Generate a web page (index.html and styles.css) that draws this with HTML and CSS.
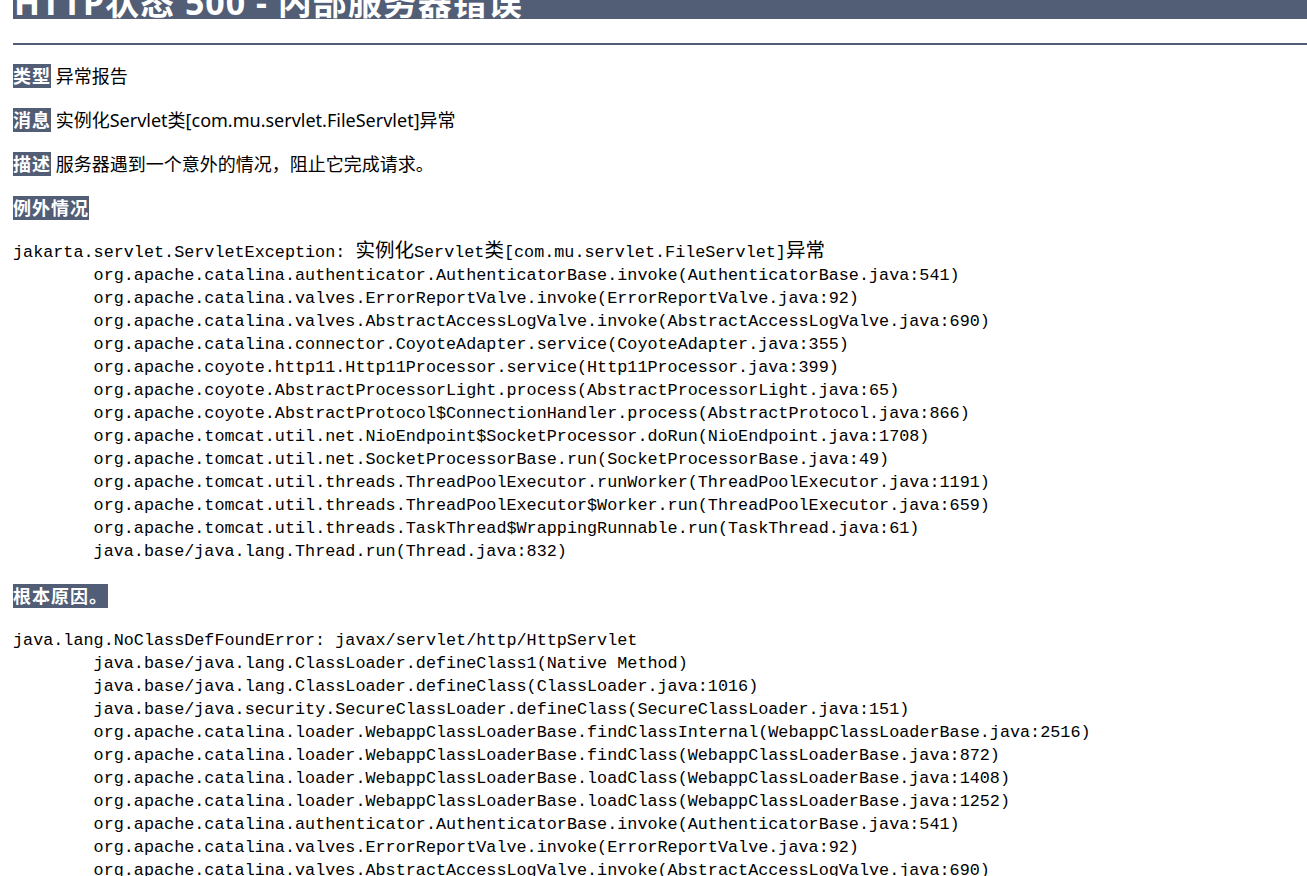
FILE: index.html
```
<!DOCTYPE html>
<html lang="zh-CN">
    <head>
        <meta charset="utf-8">
        <title>HTTP状态 500 - 内部服务器错误</title>
        <link rel="stylesheet" href="styles.css">
    </head>
    <body>
        <h1>HTTP状态 500 - 内部服务器错误</h1>
        <hr class="line">
        <p><b>类型</b> 异常报告</p>
        <p><b>消息</b> 实例化Servlet类[com.mu.servlet.FileServlet]异常</p>
        <p><b>描述</b> 服务器遇到一个意外的情况，阻止它完成请求。</p>
        <p><b>例外情况</b></p>
<pre>jakarta.servlet.ServletException: <span class="wide">实例化</span>Servlet<span class="wide">类</span>[com.mu.servlet.FileServlet]<span class="wide">异常</span>
	org.apache.catalina.authenticator.AuthenticatorBase.invoke(AuthenticatorBase.java:541)
	org.apache.catalina.valves.ErrorReportValve.invoke(ErrorReportValve.java:92)
	org.apache.catalina.valves.AbstractAccessLogValve.invoke(AbstractAccessLogValve.java:690)
	org.apache.catalina.connector.CoyoteAdapter.service(CoyoteAdapter.java:355)
	org.apache.coyote.http11.Http11Processor.service(Http11Processor.java:399)
	org.apache.coyote.AbstractProcessorLight.process(AbstractProcessorLight.java:65)
	org.apache.coyote.AbstractProtocol$ConnectionHandler.process(AbstractProtocol.java:866)
	org.apache.tomcat.util.net.NioEndpoint$SocketProcessor.doRun(NioEndpoint.java:1708)
	org.apache.tomcat.util.net.SocketProcessorBase.run(SocketProcessorBase.java:49)
	org.apache.tomcat.util.threads.ThreadPoolExecutor.runWorker(ThreadPoolExecutor.java:1191)
	org.apache.tomcat.util.threads.ThreadPoolExecutor$Worker.run(ThreadPoolExecutor.java:659)
	org.apache.tomcat.util.threads.TaskThread$WrappingRunnable.run(TaskThread.java:61)
	java.base/java.lang.Thread.run(Thread.java:832)</pre>
        <p><b>根本原因。</b></p>
<pre>java.lang.NoClassDefFoundError: javax/servlet/http/HttpServlet
	java.base/java.lang.ClassLoader.defineClass1(Native Method)
	java.base/java.lang.ClassLoader.defineClass(ClassLoader.java:1016)
	java.base/java.security.SecureClassLoader.defineClass(SecureClassLoader.java:151)
	org.apache.catalina.loader.WebappClassLoaderBase.findClassInternal(WebappClassLoaderBase.java:2516)
	org.apache.catalina.loader.WebappClassLoaderBase.findClass(WebappClassLoaderBase.java:872)
	org.apache.catalina.loader.WebappClassLoaderBase.loadClass(WebappClassLoaderBase.java:1408)
	org.apache.catalina.loader.WebappClassLoaderBase.loadClass(WebappClassLoaderBase.java:1252)
	org.apache.catalina.authenticator.AuthenticatorBase.invoke(AuthenticatorBase.java:541)
	org.apache.catalina.valves.ErrorReportValve.invoke(ErrorReportValve.java:92)
	org.apache.catalina.valves.AbstractAccessLogValve.invoke(AbstractAccessLogValve.java:690)
	org.apache.catalina.connector.CoyoteAdapter.service(CoyoteAdapter.java:355)
	org.apache.coyote.http11.Http11Processor.service(Http11Processor.java:399)</pre>
    </body>
</html>
```
FILE: styles.css
```
html {
    overflow: hidden;
}

body {
    margin: 0 0 0 13px;
    font-family: "Noto Sans", "Noto Sans CJK SC", sans-serif;
    color: black;
    background-color: white;
}

h1 {
    margin: -15px 0 24px 0;
    padding-left: 1px;
    font-size: 34px;
    line-height: 34px;
    letter-spacing: 1px;
    color: white;
    background-color: #525D76;
}

.line {
    height: 2px;
    margin: 0;
    border: none;
    background-color: #525D76;
}

p {
    margin: 18px 0;
    font-size: 18px;
    line-height: 26px;
    background: white;
    color: black;
}

b {
    letter-spacing: 1px;
    color: white;
    background-color: #525D76;
}

pre {
    margin: 20px 0;
    font-family: "Liberation Mono", "Noto Sans CJK SC", monospace;
    font-size: 16.8px;
    line-height: 23px;
    tab-size: 8;
}

pre .wide {
    font-size: 19.5px;
    line-height: 20px;
}
```
